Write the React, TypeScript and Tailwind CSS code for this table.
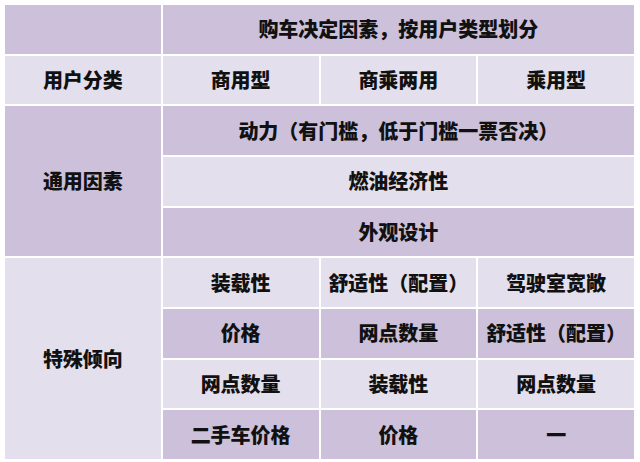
const dark = 'bg-[#ccc0da]'
const light = 'bg-[#e4dfec]'

function Cell({ children, className }: { children?: React.ReactNode; className: string }) {
    return (
        <div className={`flex items-center justify-center text-[20px] font-black text-[#111] leading-none ${className}`}>
            {children}
        </div>
    )
}

export default function App() {
    return (
        <div className="w-[640px] h-[462px] bg-white pt-[5px] pl-[5px]" style={{ fontFamily: '"Noto Sans CJK SC", "Noto Sans", sans-serif' }}>
            <div className="grid grid-cols-4 grid-rows-9 gap-[2px] w-[629px] h-[454px]">
                {/* header */}
                <Cell className={dark} />
                <Cell className={`${dark} col-span-3`}>购车决定因素，按用户类型划分</Cell>

                <Cell className={light}>用户分类</Cell>
                <Cell className={light}>商用型</Cell>
                <Cell className={light}>商乘两用</Cell>
                <Cell className={light}>乘用型</Cell>

                {/* 通用因素 */}
                <Cell className={`${dark} row-span-3`}>通用因素</Cell>
                <Cell className={`${dark} col-span-3`}>动力（有门槛，低于门槛一票否决）</Cell>
                <Cell className={`${light} col-span-3`}>燃油经济性</Cell>
                <Cell className={`${dark} col-span-3`}>外观设计</Cell>

                {/* 特殊倾向 */}
                <Cell className={`${light} row-span-4`}>特殊倾向</Cell>
                <Cell className={light}>装载性</Cell>
                <Cell className={light}>舒适性（配置）</Cell>
                <Cell className={light}>驾驶室宽敞</Cell>

                <Cell className={dark}>价格</Cell>
                <Cell className={dark}>网点数量</Cell>
                <Cell className={dark}>舒适性（配置）</Cell>

                <Cell className={light}>网点数量</Cell>
                <Cell className={light}>装载性</Cell>
                <Cell className={light}>网点数量</Cell>

                <Cell className={dark}>二手车价格</Cell>
                <Cell className={dark}>价格</Cell>
                <Cell className={dark}>一</Cell>
            </div>
        </div>
    )
}
